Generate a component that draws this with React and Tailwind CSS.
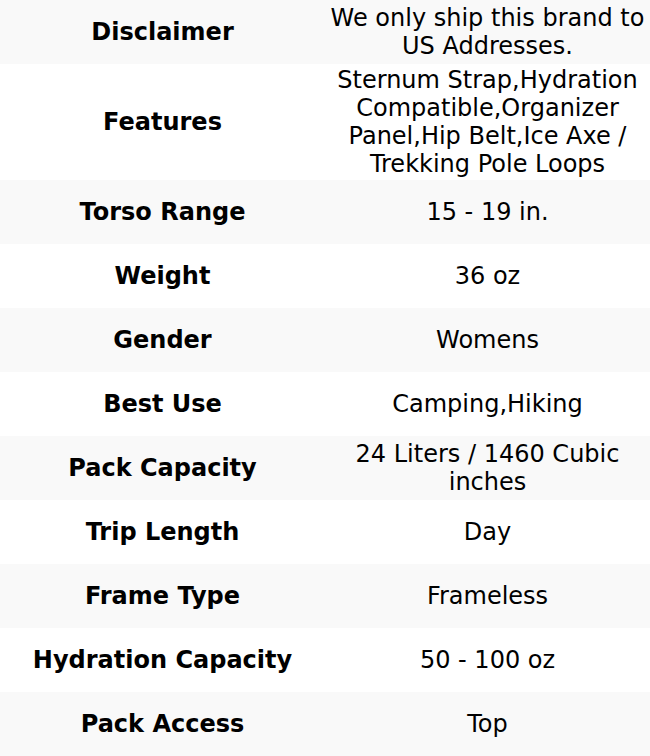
import React from 'react';

const specs = [
  { label: 'Disclaimer', value: 'We only ship this brand to US Addresses.' },
  {
    label: 'Features',
    value: 'Sternum Strap,Hydration Compatible,Organizer Panel,Hip Belt,Ice Axe / Trekking Pole Loops',
  },
  { label: 'Torso Range', value: '15 - 19 in.' },
  { label: 'Weight', value: '36 oz' },
  { label: 'Gender', value: 'Womens' },
  { label: 'Best Use', value: 'Camping,Hiking' },
  { label: 'Pack Capacity', value: '24 Liters / 1460 Cubic inches' },
  { label: 'Trip Length', value: 'Day' },
  { label: 'Frame Type', value: 'Frameless' },
  { label: 'Hydration Capacity', value: '50 - 100 oz' },
  { label: 'Pack Access', value: 'Top' },
];

const App = () => {
  return (
    <div className="w-[650px] bg-white font-['DejaVu_Sans',sans-serif] text-[24px] leading-[28px] text-black">
      <table className="w-full table-fixed border-collapse">
        <tbody>
          {specs.map((row, idx) => (
            <tr key={idx} className={idx % 2 === 0 ? 'bg-[#f9f9f9]' : 'bg-white'}>
              <td className="h-16 w-1/2 px-1 py-0.5 text-center align-middle font-bold">{row.label}</td>
              <td className="h-16 w-1/2 px-1 py-0.5 text-center align-middle">{row.value}</td>
            </tr>
          ))}
        </tbody>
      </table>
    </div>
  );
};

export default App;
